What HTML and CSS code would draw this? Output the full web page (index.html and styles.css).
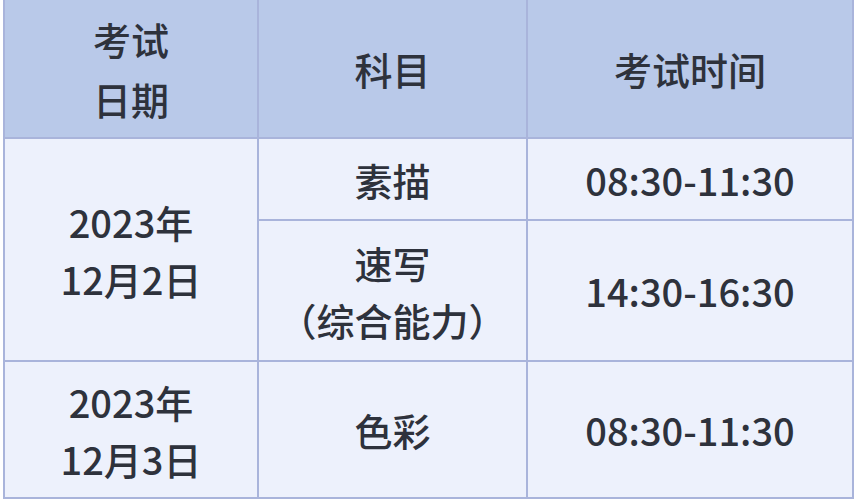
FILE: index.html
```html
<!DOCTYPE html>
<html lang="zh-CN">
<head>
<meta charset="utf-8">
<title>考试时间</title>
<link rel="stylesheet" href="styles.css">
</head>
<body>
<div class="table">
  <div class="cell head">考试<br>日期</div>
  <div class="cell head">科目</div>
  <div class="cell head">考试时间</div>

  <div class="cell date span2">2023年<br>12月2日</div>
  <div class="cell">素描</div>
  <div class="cell time">08:30-11:30</div>
  <div class="cell">速写<br>（综合能力）</div>
  <div class="cell time">14:30-16:30</div>

  <div class="cell date">2023年<br>12月3日</div>
  <div class="cell">色彩</div>
  <div class="cell time">08:30-11:30</div>
</div>
</body>
</html>
```
FILE: styles.css
```css
html, body {
  margin: 0;
  padding: 0;
  background: #ffffff;
}
body {
  font-family: "Noto Sans CJK SC", "Noto Sans", sans-serif;
  color: #2e323c;
}
.table {
  margin-left: 3px;
  width: 851px;
  box-sizing: border-box;
  display: grid;
  grid-template-columns: 252px 267px 324px;
  grid-template-rows: 137px 80px 139px 135px;
  gap: 2px;
  padding: 0 2px 2px 2px;
  background: #a9b4db;
}
.cell {
  background: #edf1fc;
  display: flex;
  align-items: center;
  justify-content: center;
  text-align: center;
  font-size: 38px;
  line-height: 57px;
  font-weight: 500;
}
.head {
  background: #b9c9e9;
  line-height: 60px;
}
.span2 {
  grid-row: span 2;
}
```
